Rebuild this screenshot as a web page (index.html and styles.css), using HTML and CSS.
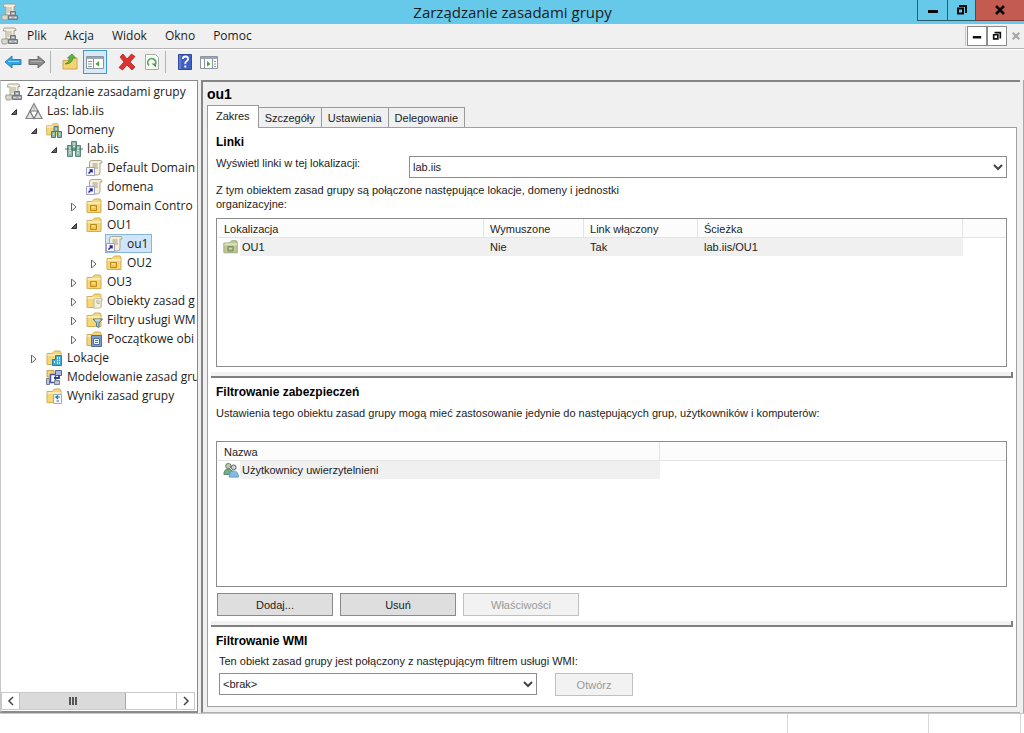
FILE: index.html
```html
<!DOCTYPE html>
<html lang="pl">
<head>
<meta charset="utf-8">
<title>Zarządzanie zasadami grupy</title>
<link rel="stylesheet" href="styles.css">
</head>
<body>
<svg class="defs" aria-hidden="true">
  <symbol id="i-console" viewBox="0 0 18 18"><path d="M4 1h9q2 0 2 2.500h-2V12H5V4H2.500V2.500Q2.500 1 4 1z" fill="#f3f0e2" stroke="#a5a192"/><path d="M6 5h5M6 7h5M6 9h3" stroke="#b3b0a0"/><path d="M1 12h6v3.500q-1 1.500-3 1.500H1.500Q0 15 1 12z" fill="#dcd8c6" stroke="#a19d8d"/><path d="M7.500 12.500h9v4h-9zM9.500 8.500h5v4h-5z" fill="#a0a6ab" stroke="#70777d"/><path d="M8.500 14.500h2M13.500 14.500h2M11 10.500h2" stroke="#e4e8ea"/></symbol>
  <symbol id="i-forest" viewBox="0 0 18 18"><path d="M9 1.500 17 16.500H1z" fill="#e4e4e4" stroke="#858585" stroke-width="1.200"/><path d="M5 9h8L9 16.500z" fill="#fff" stroke="#777" stroke-width="1.200"/><path d="M9 3v6" stroke="#aaa"/></symbol>
  <symbol id="i-folder" viewBox="0 0 18 18"><path d="M2 4.500h5L8.500 3l1-1H15l1 1.500V15.500H2z" fill="#f6d777" stroke="#d3ad50"/><path d="M2.500 6h13" stroke="#fbeab2" stroke-width="2"/></symbol>
  <symbol id="i-towers" viewBox="0 0 18 18"><path d="M6.500 1.500h5v9h-5zM2.500 5.500h5v11h-5zM10.500 5.500h5v11h-5z" fill="#8dbba5" stroke="#5b877a"/><path d="M8 4h2M8 6.500h2M4 8h2M4 10.500h2M4 13h2M12 8h2M12 10.500h2M12 13h2" stroke="#def3e7"/><path d="M0 9h4M14 9h4M7 9h4" stroke="#4a6f82"/></symbol>
  <symbol id="i-domains" viewBox="0 0 18 18"><use href="#i-folder" width="15" height="17"/><path d="M9 5.500h4v5H9zM6.500 10.500h4v6h-4zM12.500 10.500h4v6h-4z" fill="#8db5a8" stroke="#4f7883"/><path d="M8 13h1.500M14 13h1.500M10.500 8h1.500" stroke="#e0f4e9"/></symbol>
  <symbol id="i-gpo" viewBox="0 0 18 18"><path d="M6.500 1.500h9.500q1 0 1 2.500h-2v9q0 3-2.500 3H4.500V4q0-2.500 2-2.500z" fill="#f5efd9" stroke="#aba68f"/><path d="M7.500 5h5M7.500 7h5M9 9h4" stroke="#a09b86"/></symbol>
  <symbol id="i-gpolink" viewBox="0 0 18 18"><use href="#i-gpo"/><path d="M1.500 8.500h8v8h-8z" fill="#f6f6ff" stroke="#9f9fc6"/><path d="M3.500 14.500 6.500 11.500M4.500 11h2.500v2.500" fill="none" stroke="#28289a" stroke-width="1.500"/></symbol>
  <symbol id="i-ou" viewBox="0 0 18 18"><use href="#i-folder"/><path d="M5.500 8.500h6v5h-6z" fill="#f5c542" stroke="#b98a20"/><path d="M7 10h3" stroke="#fff0ad"/></symbol>
  <symbol id="i-oulink" viewBox="0 0 18 18"><path d="M1 4.500h6L8.500 3l1-1H15l1 1.500V15.500H1z" fill="#c0ca98" stroke="#93a074"/><path d="M1.500 6h14" stroke="#dee5b9" stroke-width="2"/><path d="M5.500 8.500h6v5h-6z" fill="#a5b57e" stroke="#748455"/><path d="M7 11h3" stroke="#e3edc4"/></symbol>
  <symbol id="i-objects" viewBox="0 0 18 18"><use href="#i-folder" width="18"/><use href="#i-gpo" x="6" y="5" width="12" height="13"/></symbol>
  <symbol id="i-filter" viewBox="0 0 18 18"><use href="#i-folder" width="18"/><path d="M8 8h9.500l-3.500 4v4.500l-2.500-1V12z" fill="#a0bccc" stroke="#5a7d92"/><path d="M10 9h5" stroke="#e2f1f7"/></symbol>
  <symbol id="i-starter" viewBox="0 0 18 18"><use href="#i-folder" width="18"/><path d="M6.500 5.500h10v11h-10z" fill="#7c9fcb" stroke="#4e6f9a"/><path d="M8.500 8.500h6v6h-6z" fill="#f1f5fa" stroke="#4e6f9a"/><path d="M10 10.500h3M10 12.500h3" stroke="#6281a8"/></symbol>
  <symbol id="i-sites" viewBox="0 0 18 18"><use href="#i-folder" width="18"/><path d="M10.500 6.500h6v10h-9v-6h3z" fill="#42a9d8" stroke="#2482b1"/><path d="M12 9h1M14 9h1M12 11.500h1M14 11.500h1M9 13h1M12 14h1M14 14h1" stroke="#fff" stroke-width="1.500"/></symbol>
  <symbol id="i-model" viewBox="0 0 18 18"><path d="M2 2.500h7V9H2z" fill="#f0d381" stroke="#c8a34e"/><path d="M5.500 6.500h5v8h-5z" fill="#fff" stroke="#4a4fa8" stroke-width="1.500"/><path d="M10.500 2.500h6v5h-6z" fill="#aeb8d7" stroke="#5960a0"/><path d="M1.500 10.500h3v6h-3zM9.500 12.500h5v4h-5z" fill="#b9c4cd" stroke="#71808f"/><path d="M9 10h5V7" fill="none" stroke="#3a3d96" stroke-width="1.800"/></symbol>
  <symbol id="i-results" viewBox="0 0 18 18"><use href="#i-folder" width="18"/><path d="M8.500 7.500h8v9h-8z" fill="#f5f9fd" stroke="#92adc9"/><path d="M15 10h-4l2-1.500M11 10l2 2M11.500 14H14" fill="none" stroke="#356fac" stroke-width="1.200"/></symbol>
  <symbol id="i-users" viewBox="0 0 18 18"><circle cx="6" cy="4.500" r="3" fill="#b8c8a8" stroke="#667b65"/><path d="M1 14q0-6 5-6t5 6z" fill="#77ad83" stroke="#4c7d62"/><circle cx="12" cy="6" r="2.700" fill="#cfd3d8" stroke="#4d5560"/><path d="M7 17q0-7 5-7t5.500 7z" fill="#86bbe8" stroke="#5e98c8"/></symbol>
  <symbol id="i-back" viewBox="0 0 18 18"><path d="M1 9 8 3v3.500h9v5H8V15z" fill="#35a4e4" stroke="#2f80b6"/><path d="M4 8.500h11" stroke="#91d7f8"/></symbol>
  <symbol id="i-forward" viewBox="0 0 18 18"><path d="M17 9 10 3v3.500H1v5h9V15z" fill="#8c8c8c" stroke="#6a6a6a"/><path d="M3 8.500h11" stroke="#adadad"/></symbol>
  <symbol id="i-up" viewBox="0 0 18 18"><path d="M2 7.500h5L8.500 5H16v11H2z" fill="#f5d373" stroke="#cba84f"/><path d="M4 11q4-1 5-6H6.500L11 1l3.500 4H12q-1 6-8 6z" fill="#5cb742" stroke="#398322" stroke-width=".7"/></symbol>
  <symbol id="i-panel-left" viewBox="0 0 18 18"><path d="M.5 3.500h17v12H.5z" fill="#fff" stroke="#8a959f"/><path d="M1 5h16" stroke="#9aa6b2" stroke-width="2"/><path d="M7.500 6v9M2 8.500h4M2 11h4M2 13.500h4" stroke="#8a959f"/><path d="M13 8v5.500L9.500 11z" fill="#4ba23d"/></symbol>
  <symbol id="i-delete" viewBox="0 0 18 18"><path d="M2 4 5 1l4 5 4.500-5L17 3.500 12 9l5 5-3 3-5-5-4.500 5L1 14.500 6 9z" fill="#db332e" stroke="#b52422" stroke-width=".8"/></symbol>
  <symbol id="i-refresh" viewBox="0 0 18 18"><path d="M2.500 1.500h10l3 3v12h-13z" fill="#fafcf8" stroke="#a5aea5"/><path d="M6 12.500A4 4 0 1 1 12 12" fill="none" stroke="#5aa860" stroke-width="1.800"/><path d="M8.500 10.500h4.500v4z" fill="#4a9e50"/></symbol>
  <symbol id="i-help" viewBox="0 0 18 18"><path d="M2.500 1.500h13v15h-13z" fill="#3e5fc4" stroke="#324a9a"/><path d="M4 2v14" stroke="#8298de"/><path d="M6.800 6q0-2.500 2.700-2.500T12 6q0 1.300-1.500 2.200T9.300 11" fill="none" stroke="#fff" stroke-width="1.800"/><path d="M8.300 12.500h2v2h-2z" fill="#fff"/></symbol>
  <symbol id="i-panel-right" viewBox="0 0 18 18"><path d="M.5 3.500h17v12H.5z" fill="#fff" stroke="#8a959f"/><path d="M1 5h16" stroke="#9aa6b2" stroke-width="2"/><path d="M4.500 6v9M12.500 6v9M14 8.500h2M14 11h2M14 13.500h2" stroke="#8a959f"/><path d="M7 8v5.500L10.500 11z" fill="#4ba23d"/></symbol>
  <symbol id="i-min" viewBox="0 0 12 12"><path d="M1 6h10v3H1z" fill="currentColor"/></symbol>
  <symbol id="i-restore" viewBox="0 0 12 12"><path d="M4 3V2h6v6H9" fill="none" stroke="currentColor" stroke-width="2"/><path d="M2 4.500h5v5H2z" fill="none" stroke="currentColor" stroke-width="2"/></symbol>
  <symbol id="i-close" viewBox="0 0 12 12"><path d="M2 2l8 8M10 2l-8 8" stroke="currentColor" stroke-width="2.500"/></symbol>
  <symbol id="i-open" viewBox="0 0 8 8"><path d="M6.500 1.500v5h-5z" fill="#666" stroke="#333"/></symbol>
  <symbol id="i-shut" viewBox="0 0 8 8"><path d="M1.500 0v8l4.500-4z" fill="#fff" stroke="#666"/></symbol>
  <symbol id="i-down" viewBox="0 0 10 10"><path d="M1 3l4 4 4-4" fill="none" stroke="#444" stroke-width="2"/></symbol>
  <symbol id="i-left" viewBox="0 0 10 10"><path d="M7 1 3 5l4 4" fill="none" stroke="#444" stroke-width="1.500"/></symbol>
  <symbol id="i-right" viewBox="0 0 10 10"><path d="M3 1l4 4-4 4" fill="none" stroke="#444" stroke-width="1.500"/></symbol>
</svg>

<div class="window">
  <header class="titlebar">
    <svg class="icon"><use href="#i-console"/></svg>
    <h1 class="title">Zarządzanie zasadami grupy</h1>
    <div class="controls">
      <button class="ctl ctl-min" aria-label="Minimalizuj"><svg class="glyph"><use href="#i-min"/></svg></button>
      <button class="ctl" aria-label="Przywróć"><svg class="glyph"><use href="#i-restore"/></svg></button>
      <button class="ctl ctl-close" aria-label="Zamknij"><svg class="glyph"><use href="#i-close"/></svg></button>
    </div>
  </header>

  <nav class="menubar">
    <svg class="icon"><use href="#i-console"/></svg>
    <button class="menu">Plik</button><button class="menu">Akcja</button><button class="menu">Widok</button><button class="menu">Okno</button><button class="menu">Pomoc</button>
    <div class="mdi">
      <button class="mdi-btn" aria-label="Minimalizuj okno"><svg class="small"><use href="#i-min"/></svg></button>
      <button class="mdi-btn" aria-label="Przywróć okno"><svg class="small"><use href="#i-restore"/></svg></button>
      <button class="mdi-btn mdi-off" aria-label="Zamknij okno" disabled><svg class="small"><use href="#i-close"/></svg></button>
    </div>
  </nav>

  <div class="toolbar">
    <button class="tool" aria-label="Wstecz"><svg class="icon"><use href="#i-back"/></svg></button>
    <button class="tool" aria-label="Dalej"><svg class="icon"><use href="#i-forward"/></svg></button>
    <span class="sep"></span>
    <button class="tool" aria-label="W górę"><svg class="icon"><use href="#i-up"/></svg></button>
    <button class="tool tool-on" aria-label="Drzewo konsoli"><svg class="icon"><use href="#i-panel-left"/></svg></button>
    <button class="tool tool-gap" aria-label="Usuń element"><svg class="icon"><use href="#i-delete"/></svg></button>
    <button class="tool" aria-label="Odśwież"><svg class="icon"><use href="#i-refresh"/></svg></button>
    <span class="sep"></span>
    <button class="tool" aria-label="Pomoc"><svg class="icon"><use href="#i-help"/></svg></button>
    <button class="tool" aria-label="Okienko akcji"><svg class="icon"><use href="#i-panel-right"/></svg></button>
  </div>

  <div class="body">
    <aside class="side">
      <div class="tree">
        <div class="node root"><svg class="icon"><use href="#i-console"/></svg><span class="name">Zarządzanie zasadami grupy</span></div>
        <ul class="branch first">
          <li><div class="node"><svg class="twist"><use href="#i-open"/></svg><svg class="icon"><use href="#i-forest"/></svg><span class="name">Las: lab.iis</span></div>
            <ul class="branch">
              <li><div class="node"><svg class="twist"><use href="#i-open"/></svg><svg class="icon"><use href="#i-domains"/></svg><span class="name">Domeny</span></div>
                <ul class="branch">
                  <li><div class="node"><svg class="twist"><use href="#i-open"/></svg><svg class="icon"><use href="#i-towers"/></svg><span class="name">lab.iis</span></div>
                    <ul class="branch">
                      <li><div class="node"><svg class="twist"></svg><svg class="icon"><use href="#i-gpolink"/></svg><span class="name">Default Domain</span></div></li>
                      <li><div class="node"><svg class="twist"></svg><svg class="icon"><use href="#i-gpolink"/></svg><span class="name">domena</span></div></li>
                      <li><div class="node"><svg class="twist"><use href="#i-shut"/></svg><svg class="icon"><use href="#i-ou"/></svg><span class="name">Domain Contro</span></div></li>
                      <li><div class="node"><svg class="twist"><use href="#i-open"/></svg><svg class="icon"><use href="#i-ou"/></svg><span class="name">OU1</span></div>
                        <ul class="branch">
                          <li><div class="node"><svg class="twist"></svg><span class="picked"><svg class="icon"><use href="#i-gpolink"/></svg><span class="name">ou1</span></span></div></li>
                          <li><div class="node"><svg class="twist"><use href="#i-shut"/></svg><svg class="icon"><use href="#i-ou"/></svg><span class="name">OU2</span></div></li>
                        </ul>
                      </li>
                      <li><div class="node"><svg class="twist"><use href="#i-shut"/></svg><svg class="icon"><use href="#i-ou"/></svg><span class="name">OU3</span></div></li>
                      <li><div class="node"><svg class="twist"><use href="#i-shut"/></svg><svg class="icon"><use href="#i-objects"/></svg><span class="name">Obiekty zasad g</span></div></li>
                      <li><div class="node"><svg class="twist"><use href="#i-shut"/></svg><svg class="icon"><use href="#i-filter"/></svg><span class="name">Filtry usługi WM</span></div></li>
                      <li><div class="node"><svg class="twist"><use href="#i-shut"/></svg><svg class="icon"><use href="#i-starter"/></svg><span class="name">Początkowe obi</span></div></li>
                    </ul>
                  </li>
                </ul>
              </li>
              <li><div class="node"><svg class="twist"><use href="#i-shut"/></svg><svg class="icon"><use href="#i-sites"/></svg><span class="name">Lokacje</span></div></li>
              <li><div class="node"><svg class="twist"></svg><svg class="icon"><use href="#i-model"/></svg><span class="name">Modelowanie zasad gru</span></div></li>
              <li><div class="node"><svg class="twist"></svg><svg class="icon"><use href="#i-results"/></svg><span class="name">Wyniki zasad grupy</span></div></li>
            </ul>
          </li>
        </ul>
      </div>
      <div class="scroll">
        <button class="scroll-btn" aria-label="Przewiń w lewo"><svg class="chev"><use href="#i-left"/></svg></button>
        <div class="track"><div class="thumb"><span class="grip"></span></div></div>
        <button class="scroll-btn" aria-label="Przewiń w prawo"><svg class="chev"><use href="#i-right"/></svg></button>
      </div>
    </aside>

    <main class="main">
      <h2 class="object">ou1</h2>
      <div class="tabs" role="tablist">
        <button class="tab tab-on" role="tab" aria-selected="true">Zakres</button><button class="tab" role="tab">Szczegóły</button><button class="tab" role="tab">Ustawienia</button><button class="tab" role="tab">Delegowanie</button>
      </div>
      <div class="page">
        <section class="group grow">
          <h3 class="head">Linki</h3>
          <div class="field">
            <label class="label" for="where">Wyświetl linki w tej lokalizacji:</label>
            <span class="combo"><select class="select" id="where"><option>lab.iis</option></select><svg class="chev"><use href="#i-down"/></svg></span>
          </div>
          <p class="note narrow">Z tym obiektem zasad grupy są połączone następujące lokacje, domeny i jednostki organizacyjne:</p>
          <div class="list">
            <table class="grid">
              <colgroup><col class="c-icon"><col class="c-loc"><col class="c-forced"><col class="c-link"><col class="c-path"><col></colgroup>
              <thead><tr><th colspan="2">Lokalizacja</th><th>Wymuszone</th><th>Link włączony</th><th>Ścieżka</th><th></th></tr></thead>
              <tbody><tr><td class="cell-icon"><svg class="mini"><use href="#i-oulink"/></svg></td><td class="cell-name">OU1</td><td>Nie</td><td>Tak</td><td>lab.iis/OU1</td><td class="blank"></td></tr></tbody>
            </table>
          </div>
        </section>
        <div class="splitter"></div>
        <section class="group grow">
          <h3 class="head">Filtrowanie zabezpieczeń</h3>
          <p class="note spaced">Ustawienia tego obiektu zasad grupy mogą mieć zastosowanie jedynie do następujących grup, użytkowników i komputerów:</p>
          <div class="list">
            <table class="grid">
              <colgroup><col class="c-icon"><col class="c-user"><col></colgroup>
              <thead><tr><th colspan="2">Nazwa</th><th></th></tr></thead>
              <tbody><tr><td class="cell-icon"><svg class="mini"><use href="#i-users"/></svg></td><td class="cell-name">Użytkownicy uwierzytelnieni</td><td class="blank"></td></tr></tbody>
            </table>
          </div>
          <div class="actions"><button class="btn">Dodaj...</button><button class="btn">Usuń</button><button class="btn" disabled>Właściwości</button></div>
        </section>
        <div class="splitter"></div>
        <section class="group">
          <h3 class="head">Filtrowanie WMI</h3>
          <div class="wmi">
            <label class="note" for="wmi">Ten obiekt zasad grupy jest połączony z następującym filtrem usługi WMI:</label>
            <div class="wmi-row">
              <span class="combo combo-wmi"><select class="select" id="wmi"><option>&lt;brak&gt;</option></select><svg class="chev"><use href="#i-down"/></svg></span>
              <button class="btn btn-small" disabled>Otwórz</button>
            </div>
          </div>
        </section>
      </div>
    </main>
  </div>
  <footer class="status"><span class="pane pane-wide"></span><span class="pane pane-mid"></span><span class="pane pane-end"></span></footer>
</div>
</body>
</html>
```
FILE: styles.css
```css
* { box-sizing: border-box; }
body { margin: 0; color: #1c1c1c; background: #fff; font: 11px/14px "Liberation Sans", Arial, sans-serif; }
button, select { font: inherit; color: inherit; margin: 0; padding: 0; border: 0; background: none; border-radius: 0; }
h1, h2, h3, p, ul { margin: 0; padding: 0; }
ul { list-style: none; }
svg { display: block; flex: none; }
.defs { position: absolute; width: 0; height: 0; }
.icon { width: 18px; height: 18px; }
.mini { width: 16px; height: 16px; }
.glyph { width: 12px; height: 12px; }
.small, .chev { width: 10px; height: 10px; }

.window { display: flex; flex-direction: column; height: 100vh; background: #f0f0f0; }

.titlebar { display: grid; grid-template-columns: 107px 1fr 107px; height: 24px; background: #66c9ea; padding-left: 1px; align-items: center; }
.title { font: 400 15px/22px "Open Sans", "Noto Sans", sans-serif; text-align: center; white-space: nowrap; }
.controls { display: flex; align-self: start; }
.ctl { display: grid; place-items: center; width: 28px; height: 21px; border: solid #2d5e70; border-width: 0 0 1px 1px; color: #0a0a0a; }
.ctl-min { width: 30px; }
.ctl-close { flex: 1; background: #c35b50; border-color: #7d3a35; }

.menubar { display: flex; align-items: center; height: 25px; padding-left: 1px; border-bottom: 1px solid #b4b4b4; font: 12px/16px "Open Sans", "Noto Sans", sans-serif; }
.menu { padding: 0 9px; }
.menubar > .icon { margin-right: -1px; }
.mdi { display: flex; margin-left: auto; padding-left: 1px; border-left: 1px solid #c8c8c8; }
.mdi-btn { display: grid; place-items: center; width: 20px; height: 20px; border: 1px solid #8c8c8c; background: #fff; color: #111; }
.mdi-off { width: 17px; border-color: transparent; background: none; color: #a5a5a5; }

.toolbar { display: flex; align-items: center; height: 31px; padding: 0 1px 6px; border-top: 1px solid #fff; }
.tool { display: grid; place-items: center; width: 24px; height: 24px; }
.tool-on { border: 1px solid #3a9bdc; background: #d5e9f8; margin-left: 1px; }
.tool-gap { margin-left: 8px; }
.tool-gap + .tool { margin-left: 1px; }
.sep { width: 1px; height: 22px; margin: 0 7px 0 1px; background: #b5b5b5; }

.body { display: flex; flex: 1; min-height: 0; gap: 3px; padding-right: 3px; border-right: 1px solid #a8a8a8; }
.side { display: flex; flex-direction: column; width: 198px; flex: none; background: #fff; border: solid #8a8a8a; border-width: 1px 1px 2px; border-left-color: #c8c8c8; }
.tree { flex: 1; overflow: hidden; padding-top: 1px; font: 12px/19px "Open Sans", "Noto Sans", sans-serif; }
.node { display: flex; align-items: center; height: 19px; white-space: nowrap; }
.root { padding-left: 4px; }
.branch { padding-left: 20px; }
.first { padding-left: 9px; }
.twist { width: 8px; height: 8px; margin: 2px 7px 0 0; }
.name { padding-left: 4px; }
.picked { display: flex; align-items: center; height: 19px; padding-right: 4px; background: #cfe5fa; outline: 1px solid #86b5e2; outline-offset: -1px; }
.scroll { display: flex; height: 18px; margin-bottom: 1px; border: 1px solid #c9c9c9; margin-right: 2px; }
.scroll-btn { display: grid; place-items: center; width: 17px; }
.track { flex: 1; border: solid #c0c0c0; border-width: 0 1px; }
.thumb { display: grid; place-items: center; width: 68%; height: 100%; background: #dadada; border-right: 1px solid #a8a8a8; }
.grip { width: 8px; height: 8px; background: repeating-linear-gradient(90deg, #555 0 2px, #dadada 2px 3px); }

.main { display: flex; flex: 1; flex-direction: column; min-width: 0; padding: 4px 3px 5px 4px; border: solid #858585; border-width: 2px 0 1px 2px; border-bottom-color: #b0b0b0; }
.object { font-size: 14px; line-height: 16px; color: #000; }
.tabs { display: flex; align-items: flex-end; height: 22px; margin-top: 3px; }
.tab { height: 20px; padding: 0 6px; border: solid #9a9a9a; border-width: 1px 1px 0 0; white-space: nowrap; }
.tab-on { height: 23px; margin-bottom: -1px; padding: 0 8px 3px; border-left-width: 1px; background: #fff; position: relative; }
.page { display: flex; flex: 1; flex-direction: column; min-height: 0; padding: 6px 3px 10px; background: #fff; border: 1px solid #a0a0a0; }
.group { padding: 0 6px 0 5px; }
.grow { display: flex; flex: 1; flex-direction: column; min-height: 0; }
.head { font-size: 12px; line-height: 16px; color: #000; }
.field { display: flex; margin-top: 6px; }
.label { width: 193px; white-space: nowrap; }
.combo { position: relative; flex: 1; height: 22px; border: 1px solid #8c8c8c; background: #fff; }
.combo .chev { position: absolute; right: 3px; top: 5px; pointer-events: none; }
.select { appearance: none; width: 100%; height: 20px; padding: 0 16px 0 3px; }
.note { display: block; }
.narrow { max-width: 420px; margin: 5px 0 7px; }
.spaced { margin: 6px 0 21px; white-space: nowrap; }
.list { flex: 1; min-height: 0; overflow: hidden; padding: 0 0 0 1px; border: 1px solid #8c8c8c; background: #fff; }
.grid { width: 100%; table-layout: fixed; border-collapse: separate; border-spacing: 0; }
.grid th { height: 19px; padding: 2px 6px 0; text-align: left; font-weight: 400; background: #fcfcfc; border: solid #e4e4e4; border-width: 0 1px 1px 0; white-space: nowrap; }
.grid th:last-child { border-right: 0; }
.grid td { height: 18px; padding: 0 6px; background: #f0f0f0; white-space: nowrap; }
.grid .cell-icon { padding: 0 0 0 5px; background: #fff; }
.grid .cell-name { padding: 0 2px; }
.grid .blank { background: #fff; }
.c-icon { width: 22px; }
.c-loc { width: 244px; }
.c-forced { width: 100px; }
.c-link { width: 114px; }
.c-path { width: 265px; }
.c-user { width: 420px; }
.splitter { height: 6px; margin: 5px 0 6px; border: solid #808080; border-width: 0 2px 2px 0; background: #f2f2f2; }
.actions { display: flex; gap: 7px; padding: 6px 1px 0; }
.btn { width: 116px; height: 23px; border: 1px solid #8a8a8a; background: #dedede; }
.btn:disabled { color: #999; border-color: #c0c0c0; background: #f2f2f2; }
.btn-small { width: 78px; }
.wmi { padding: 5px 3px 0; }
.wmi-row { display: flex; gap: 18px; margin-top: 5px; }
.combo-wmi { flex: 0 1 318px; }

.status { display: flex; height: 20px; border-top: 1px solid #c8c8c8; background: #fff; padding-right: 3px; }
.pane { border-right: 1px solid #d8d8d8; }
.pane-wide { flex: 1; }
.pane-mid { width: 141px; }
.pane-end { width: 92px; }
```
